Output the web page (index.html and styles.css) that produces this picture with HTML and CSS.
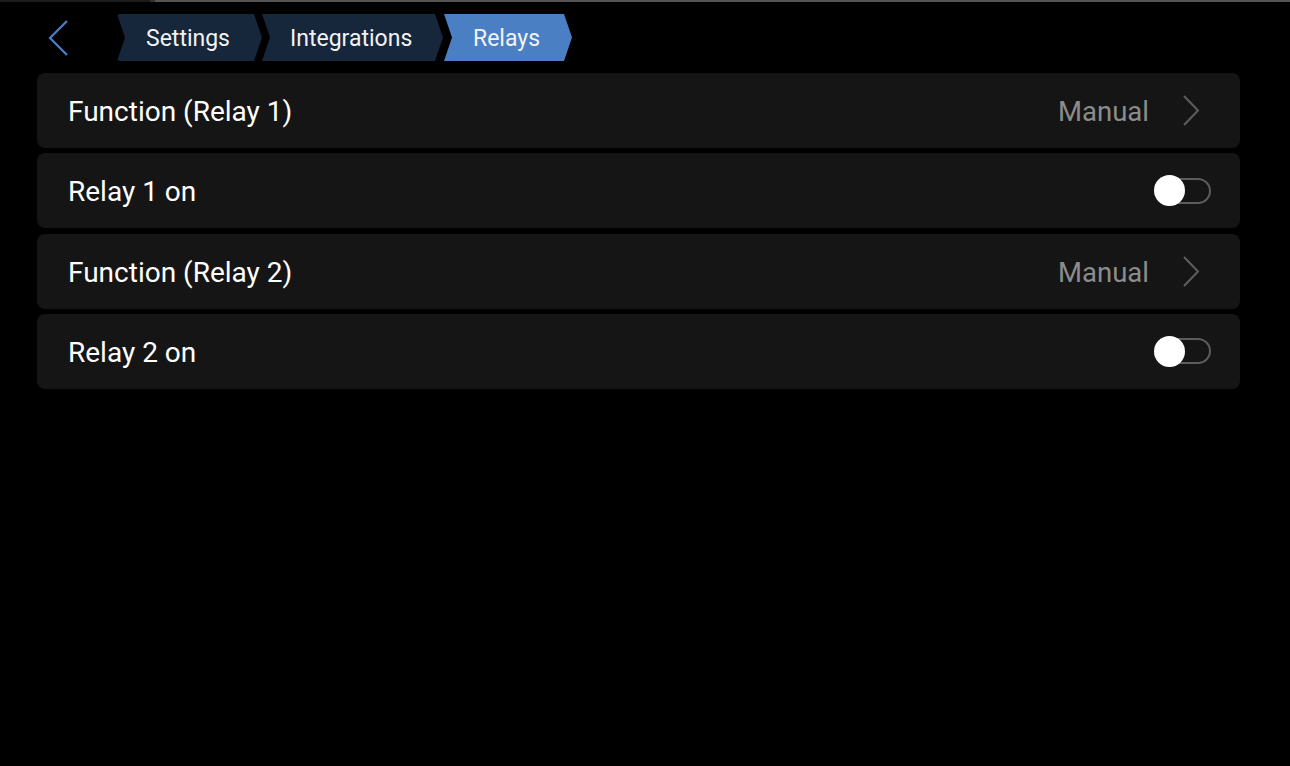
FILE: index.html
```html
<!DOCTYPE html>
<html>
<head>
<meta charset="utf-8">
<link rel="stylesheet" href="styles.css">
</head>
<body>
<div class="topline"><div class="tl-a"></div><div class="tl-b"></div><div class="tl-c"></div></div>
<header class="header">
  <button class="back" aria-label="Back">
    <svg width="22" height="36" viewBox="0 0 22 36"><polyline points="19,1 2,18 19,35" fill="none" stroke="#4a80c8" stroke-width="2.2"/></svg>
  </button>
  <nav class="crumbs">
    <span class="crumb first">Settings</span>
    <span class="crumb mid">Integrations</span>
    <span class="crumb active">Relays</span>
  </nav>
</header>
<main class="list">
  <div class="row">
    <span class="label">Function (Relay 1)</span>
    <span class="value">Manual</span>
    <svg class="chev" width="18" height="31" viewBox="0 0 18 31"><polyline points="2,1 16,15.5 2,30" fill="none" stroke="#5e5e5e" stroke-width="2"/></svg>
  </div>
  <div class="row toggle-row">
    <span class="label">Relay 1 on</span>
    <span class="switch"><span class="knob"></span></span>
  </div>
  <div class="row">
    <span class="label">Function (Relay 2)</span>
    <span class="value">Manual</span>
    <svg class="chev" width="18" height="31" viewBox="0 0 18 31"><polyline points="2,1 16,15.5 2,30" fill="none" stroke="#5e5e5e" stroke-width="2"/></svg>
  </div>
  <div class="row toggle-row">
    <span class="label">Relay 2 on</span>
    <span class="switch"><span class="knob"></span></span>
  </div>
</main>
</body>
</html>
```

FILE: styles.css
```css
html, body {
  margin: 0;
  padding: 0;
  background: #000;
  height: 100%;
}
body {
  font-family: Roboto, "Noto Sans", sans-serif;
  color: #fff;
  overflow: hidden;
}
.topline {
  display: flex;
  height: 2px;
}
.tl-a { width: 150px; background: #1c1c1c; }
.tl-b { width: 5px; background: #333; }
.tl-c { flex: 1; background: #555; }

.header {
  display: flex;
  align-items: center;
  height: 47px;
  margin-top: 12px;
  padding-left: 48px;
}
.back {
  background: none;
  border: 0;
  padding: 0;
  width: 22px;
  height: 36px;
  display: flex;
  cursor: pointer;
}
.crumbs {
  display: flex;
  height: 47px;
  margin-left: 47px;
}
.crumb {
  display: flex;
  align-items: center;
  height: 47px;
  padding-top: 2px;
  font-size: 23px;
  color: #f2f2f2;
  background: #16263b;
  clip-path: polygon(0 0, calc(100% - 8px) 0, 100% 50%, calc(100% - 8px) 100%, 0 100%, 8px 50%);
  box-sizing: border-box;
}
.crumb.first { width: 145px; padding-left: 29px; border-radius: 3px; }
.crumb.mid { width: 181px; padding-left: 28px; }
.crumb.active { width: 128px; padding-left: 29px; background: #4a7fc4; margin-left: 1px; }

.list {
  display: flex;
  flex-direction: column;
  gap: 5.33px;
  margin-top: 12px;
  padding: 0 50px 0 37px;
}
.row {
  display: flex;
  align-items: center;
  height: 75px;
  background: #151515;
  border-radius: 8px;
  padding: 0 40px 0 31px;
  box-sizing: border-box;
}
.label {
  font-size: 28px;
  color: #fff;
  padding-top: 2px;
}
.value {
  margin-left: auto;
  font-size: 27.5px;
  color: #8c8c8c;
  padding-top: 2px;
}
.chev {
  margin-left: 33px;
}
.toggle-row {
  padding-right: 29px;
}
.switch {
  margin-left: auto;
  position: relative;
  width: 55px;
  height: 26px;
  box-sizing: border-box;
  border: 2px solid #5c5c5c;
  border-radius: 13px;
}
.knob {
  position: absolute;
  left: -4px;
  top: -4.5px;
  width: 31px;
  height: 31px;
  border-radius: 50%;
  background: #fff;
}
```
